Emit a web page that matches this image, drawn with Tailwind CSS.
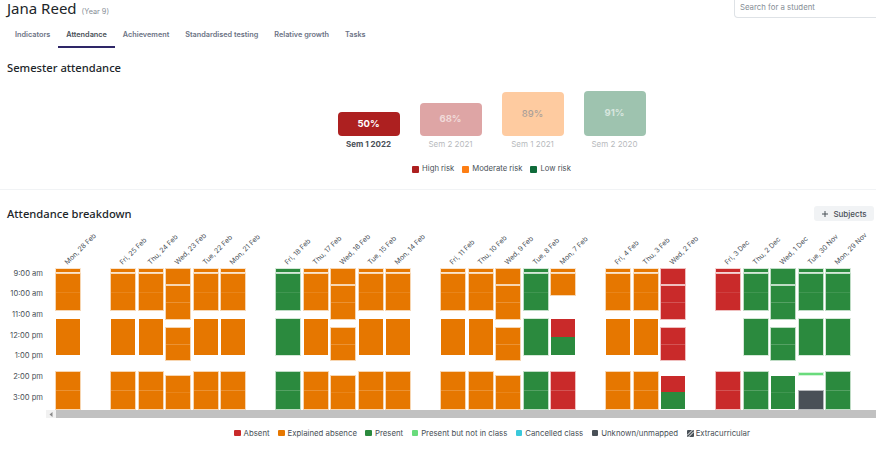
<!DOCTYPE html>
<html lang="en">
<head>
<meta charset="utf-8">
<script src="https://cdn.jsdelivr.net/npm/@tailwindcss/browser@4"></script>
<title>Attendance</title>
</head>
<body class="bg-white">
<div class="w-[876px] h-[456px] overflow-hidden font-['Inter',sans-serif] text-[#343a40] flex flex-col">
  <!-- header -->
  <div class="h-[26px] flex justify-between pl-[7px]">
    <div class="flex items-baseline gap-[5px]">
      <span class="font-['Noto_Sans',sans-serif] text-[15px] leading-[17px] text-[#212529]">Jana Reed</span>
      <span class="text-[7.3px] text-[#868e96]">(Year 9)</span>
    </div>
    <div class="w-[150px] h-[18px] ml-auto -mr-[8px] border border-t-0 border-[#dee2e6] rounded-bl-[4px] flex items-center pl-[5px] pb-[2px] text-[7.8px] text-[#868e96]">Search for a student</div>
  </div>
  <!-- tabs -->
  <div class="h-[22px] flex pl-[7px] text-[7.3px] font-semibold text-[#6c7385]">
    <div class="px-2 pt-[4px]">Indicators</div>
    <div class="px-2 pt-[4px] text-[#495057] border-b-2 border-[#2e2667]">Attendance</div>
    <div class="px-2 pt-[4px]">Achievement</div>
    <div class="px-2 pt-[4px]">Standardised testing</div>
    <div class="px-2 pt-[4px]">Relative growth</div>
    <div class="px-2 pt-[4px]">Tasks</div>
  </div>
  <!-- semester -->
  <div class="pl-[7px] pt-[11px] h-[29px] font-['Noto_Sans',sans-serif] text-[11.2px] leading-[18px] font-medium text-[#212529]">Semester attendance</div>
  <div class="pl-[107px] h-[112px] flex flex-col">
    <div class="h-[66px] mt-[-7px] flex items-end justify-center gap-5 text-[8.5px] font-semibold">
      <div class="w-[62px] flex flex-col items-center">
        <div class="w-full h-6 rounded-[4px] bg-[#ad2020] text-white text-[9.5px] font-bold flex items-center justify-center">50%</div>
      </div>
      <div class="w-[62px] h-[33px] rounded-[4px] bg-[#ad2020] opacity-40 text-white/60 text-[9.5px] font-bold flex items-center justify-center">68%</div>
      <div class="w-[62px] h-[44px] rounded-[4px] bg-[#fd7e14] opacity-40 text-[#2d1000] text-[9.5px] font-medium flex items-center justify-center">89%</div>
      <div class="w-[62px] h-[45px] rounded-[4px] bg-[#0f6b3a] opacity-40 text-white/60 text-[9.5px] font-bold flex items-center justify-center">91%</div>
    </div>
    <div class="flex justify-center gap-5 mt-[3px] text-[8px] leading-[10px] text-center">
      <div class="w-[62px] font-bold text-[#495057]">Sem 1 2022</div>
      <div class="w-[62px] text-[#495057] opacity-40">Sem 2 2021</div>
      <div class="w-[62px] text-[#495057] opacity-40">Sem 1 2021</div>
      <div class="w-[62px] text-[#495057] opacity-40">Sem 2 2020</div>
    </div>
    <div class="flex justify-center gap-[8px] mt-[15px] text-[7.7px] leading-[10px] text-[#495057]">
      <div class="flex items-center gap-[3px]"><span class="w-[7px] h-[7px] rounded-[1px] bg-[#ad2020]"></span>High risk</div>
      <div class="flex items-center gap-[3px]"><span class="w-[7px] h-[7px] rounded-[1px] bg-[#fd7e14]"></span>Moderate risk</div>
      <div class="flex items-center gap-[3px]"><span class="w-[7px] h-[7px] rounded-[1px] bg-[#0f6b3a]"></span>Low risk</div>
    </div>
  </div>
  <div class="h-px bg-[#f1f3f5]"></div>
  <!-- breakdown -->
  <div class="h-[43px] pl-[7px] pr-[2px] pt-[16px] flex justify-between items-start">
    <span class="font-['Noto_Sans',sans-serif] text-[11.2px] leading-[18px] -mt-px font-medium text-[#212529]">Attendance breakdown</span>
    <div class="w-[60px] h-[15px] rounded-[3px] bg-[#f1f3f5] flex items-center justify-center gap-[4px] text-[8px] font-medium text-[#495057]">
      <svg width="8" height="8" viewBox="0 0 8 8" fill="none" stroke="#495057" stroke-width="1"><path d="M4 1v6M1 4h6"/></svg>
      Subjects
    </div>
  </div>
  <div class="flex">
    <div class="w-[46px] shrink-0 pt-[30.5px] pr-[3px] text-right text-[7.6px] text-[#495057]">
      <div class="h-[20.7px] leading-[20.7px]">9:00 am</div>
      <div class="h-[20.7px] leading-[20.7px]">10:00 am</div>
      <div class="h-[20.7px] leading-[20.7px]">11:00 am</div>
      <div class="h-[20.7px] leading-[20.7px]">12:00 pm</div>
      <div class="h-[20.7px] leading-[20.7px]">1:00 pm</div>
      <div class="h-[20.7px] leading-[20.7px]">2:00 pm</div>
      <div class="h-[20.7px] leading-[20.7px]">3:00 pm</div>
    </div>
    <div class="flex-1 min-w-0">
      <div class="flex pl-[10px] gap-[31px] text-[6.9px] h-[176px]">

        <div class="flex gap-[3.5px]">
          <div class="w-6 flex flex-col text-[#e67700]">
            <div class="relative h-9"><span class="absolute left-[14px] bottom-[2px] origin-bottom-left -rotate-45 whitespace-nowrap text-[#495057]">Mon, 28 Feb</span></div>
            <div class="h-[3px] bg-current ring-1 ring-current/20"></div>
            <div class="h-9 mt-[2px] bg-current ring-1 ring-current/30 flex flex-col justify-center"><i class="block h-px bg-white/10"></i></div>
            <div class="h-9 mt-[9px] bg-current"></div>
            <div class="h-[37px] mt-[17px] bg-current ring-1 ring-current/30 flex flex-col justify-center"><i class="block h-px bg-white/20"></i></div>
          </div>
        </div>

        <div class="flex gap-[3.5px]">
          <div class="w-6 flex flex-col text-[#e67700]">
            <div class="relative h-9"><span class="absolute left-[14px] bottom-[2px] origin-bottom-left -rotate-45 whitespace-nowrap text-[#495057]">Fri, 25 Feb</span></div>
            <div class="h-[3px] bg-current ring-1 ring-current/20"></div>
            <div class="h-9 mt-[2px] bg-current ring-1 ring-current/30 flex flex-col justify-center"><i class="block h-px bg-white/10"></i></div>
            <div class="h-9 mt-[9px] bg-current"></div>
            <div class="h-[37px] mt-[17px] bg-current ring-1 ring-current/30 flex flex-col justify-center"><i class="block h-px bg-white/20"></i></div>
          </div>
          <div class="w-6 flex flex-col text-[#e67700]">
            <div class="relative h-9"><span class="absolute left-[14px] bottom-[2px] origin-bottom-left -rotate-45 whitespace-nowrap text-[#495057]">Thu, 24 Feb</span></div>
            <div class="h-[3px] bg-current ring-1 ring-current/20"></div>
            <div class="h-9 mt-[2px] bg-current ring-1 ring-current/30 flex flex-col justify-center"><i class="block h-px bg-white/10"></i></div>
            <div class="h-9 mt-[9px] bg-current"></div>
            <div class="h-[37px] mt-[17px] bg-current ring-1 ring-current/30 flex flex-col justify-center"><i class="block h-px bg-white/20"></i></div>
          </div>
          <div class="w-6 flex flex-col text-[#e67700]">
            <div class="relative h-9"><span class="absolute left-[14px] bottom-[2px] origin-bottom-left -rotate-45 whitespace-nowrap text-[#495057]">Wed, 23 Feb</span></div>
            <div class="h-[15px] bg-current ring-1 ring-current/30"></div>
            <div class="h-[33px] mt-[2px] bg-current ring-1 ring-current/30 flex flex-col justify-center"><i class="block h-px bg-white/20"></i></div>
            <div class="h-[32px] mt-[9px] bg-current ring-1 ring-current/30 flex flex-col justify-center"><i class="block h-px bg-white/20"></i></div>
            <div class="h-[33px] mt-[16px] bg-current ring-1 ring-current/30 flex flex-col justify-center"><i class="block h-px bg-white/10"></i></div>
          </div>
          <div class="w-6 flex flex-col text-[#e67700]">
            <div class="relative h-9"><span class="absolute left-[14px] bottom-[2px] origin-bottom-left -rotate-45 whitespace-nowrap text-[#495057]">Tue, 22 Feb</span></div>
            <div class="h-[3px] bg-current ring-1 ring-current/20"></div>
            <div class="h-9 mt-[2px] bg-current ring-1 ring-current/30 flex flex-col justify-center"><i class="block h-px bg-white/10"></i></div>
            <div class="h-9 mt-[9px] bg-current"></div>
            <div class="h-[37px] mt-[17px] bg-current ring-1 ring-current/30 flex flex-col justify-center"><i class="block h-px bg-white/20"></i></div>
          </div>
          <div class="w-6 flex flex-col text-[#e67700]">
            <div class="relative h-9"><span class="absolute left-[14px] bottom-[2px] origin-bottom-left -rotate-45 whitespace-nowrap text-[#495057]">Mon, 21 Feb</span></div>
            <div class="h-[3px] bg-current ring-1 ring-current/20"></div>
            <div class="h-9 mt-[2px] bg-current ring-1 ring-current/30 flex flex-col justify-center"><i class="block h-px bg-white/10"></i></div>
            <div class="h-9 mt-[9px] bg-current"></div>
            <div class="h-[37px] mt-[17px] bg-current ring-1 ring-current/30 flex flex-col justify-center"><i class="block h-px bg-white/20"></i></div>
          </div>
        </div>

        <div class="flex gap-[3.5px]">
          <div class="w-6 flex flex-col text-[#2b8a3e]">
            <div class="relative h-9"><span class="absolute left-[14px] bottom-[2px] origin-bottom-left -rotate-45 whitespace-nowrap text-[#495057]">Fri, 18 Feb</span></div>
            <div class="h-[3px] bg-current ring-1 ring-current/20"></div>
            <div class="h-9 mt-[2px] bg-current ring-1 ring-current/30 flex flex-col justify-center"><i class="block h-px bg-white/10"></i></div>
            <div class="h-9 mt-[9px] bg-current ring-1 ring-current/20"></div>
            <div class="h-[37px] mt-[17px] bg-current ring-1 ring-current/30 flex flex-col justify-center"><i class="block h-px bg-white/20"></i></div>
          </div>
          <div class="w-6 flex flex-col text-[#e67700]">
            <div class="relative h-9"><span class="absolute left-[14px] bottom-[2px] origin-bottom-left -rotate-45 whitespace-nowrap text-[#495057]">Thu, 17 Feb</span></div>
            <div class="h-[3px] bg-current ring-1 ring-current/20"></div>
            <div class="h-9 mt-[2px] bg-current ring-1 ring-current/30 flex flex-col justify-center"><i class="block h-px bg-white/10"></i></div>
            <div class="h-9 mt-[9px] bg-current"></div>
            <div class="h-[37px] mt-[17px] bg-current ring-1 ring-current/30 flex flex-col justify-center"><i class="block h-px bg-white/20"></i></div>
          </div>
          <div class="w-6 flex flex-col text-[#e67700]">
            <div class="relative h-9"><span class="absolute left-[14px] bottom-[2px] origin-bottom-left -rotate-45 whitespace-nowrap text-[#495057]">Wed, 16 Feb</span></div>
            <div class="h-[15px] bg-current ring-1 ring-current/30"></div>
            <div class="h-[33px] mt-[2px] bg-current ring-1 ring-current/30 flex flex-col justify-center"><i class="block h-px bg-white/20"></i></div>
            <div class="h-[32px] mt-[9px] bg-current ring-1 ring-current/30 flex flex-col justify-center"><i class="block h-px bg-white/20"></i></div>
            <div class="h-[33px] mt-[16px] bg-current ring-1 ring-current/30 flex flex-col justify-center"><i class="block h-px bg-white/10"></i></div>
          </div>
          <div class="w-6 flex flex-col text-[#e67700]">
            <div class="relative h-9"><span class="absolute left-[14px] bottom-[2px] origin-bottom-left -rotate-45 whitespace-nowrap text-[#495057]">Tue, 15 Feb</span></div>
            <div class="h-[3px] bg-current ring-1 ring-current/20"></div>
            <div class="h-9 mt-[2px] bg-current ring-1 ring-current/30 flex flex-col justify-center"><i class="block h-px bg-white/10"></i></div>
            <div class="h-9 mt-[9px] bg-current"></div>
            <div class="h-[37px] mt-[17px] bg-current ring-1 ring-current/30 flex flex-col justify-center"><i class="block h-px bg-white/20"></i></div>
          </div>
          <div class="w-6 flex flex-col text-[#e67700]">
            <div class="relative h-9"><span class="absolute left-[14px] bottom-[2px] origin-bottom-left -rotate-45 whitespace-nowrap text-[#495057]">Mon, 14 Feb</span></div>
            <div class="h-[3px] bg-current ring-1 ring-current/20"></div>
            <div class="h-9 mt-[2px] bg-current ring-1 ring-current/30 flex flex-col justify-center"><i class="block h-px bg-white/10"></i></div>
            <div class="h-9 mt-[9px] bg-current"></div>
            <div class="h-[37px] mt-[17px] bg-current ring-1 ring-current/30 flex flex-col justify-center"><i class="block h-px bg-white/20"></i></div>
          </div>
        </div>

        <div class="flex gap-[3.5px]">
          <div class="w-6 flex flex-col text-[#e67700]">
            <div class="relative h-9"><span class="absolute left-[14px] bottom-[2px] origin-bottom-left -rotate-45 whitespace-nowrap text-[#495057]">Fri, 11 Feb</span></div>
            <div class="h-[3px] bg-current ring-1 ring-current/20"></div>
            <div class="h-9 mt-[2px] bg-current ring-1 ring-current/30 flex flex-col justify-center"><i class="block h-px bg-white/10"></i></div>
            <div class="h-9 mt-[9px] bg-current"></div>
            <div class="h-[37px] mt-[17px] bg-current ring-1 ring-current/30 flex flex-col justify-center"><i class="block h-px bg-white/20"></i></div>
          </div>
          <div class="w-6 flex flex-col text-[#e67700]">
            <div class="relative h-9"><span class="absolute left-[14px] bottom-[2px] origin-bottom-left -rotate-45 whitespace-nowrap text-[#495057]">Thu, 10 Feb</span></div>
            <div class="h-[3px] bg-current ring-1 ring-current/20"></div>
            <div class="h-9 mt-[2px] bg-current ring-1 ring-current/30 flex flex-col justify-center"><i class="block h-px bg-white/10"></i></div>
            <div class="h-9 mt-[9px] bg-current"></div>
            <div class="h-[37px] mt-[17px] bg-current ring-1 ring-current/30 flex flex-col justify-center"><i class="block h-px bg-white/20"></i></div>
          </div>
          <div class="w-6 flex flex-col text-[#e67700]">
            <div class="relative h-9"><span class="absolute left-[14px] bottom-[2px] origin-bottom-left -rotate-45 whitespace-nowrap text-[#495057]">Wed, 9 Feb</span></div>
            <div class="h-[15px] bg-current ring-1 ring-current/30"></div>
            <div class="h-[33px] mt-[2px] bg-current ring-1 ring-current/30 flex flex-col justify-center"><i class="block h-px bg-white/20"></i></div>
            <div class="h-[32px] mt-[9px] bg-current ring-1 ring-current/30 flex flex-col justify-center"><i class="block h-px bg-white/20"></i></div>
            <div class="h-[33px] mt-[16px] bg-current ring-1 ring-current/30 flex flex-col justify-center"><i class="block h-px bg-white/10"></i></div>
          </div>
          <div class="w-6 flex flex-col text-[#2b8a3e]">
            <div class="relative h-9"><span class="absolute left-[14px] bottom-[2px] origin-bottom-left -rotate-45 whitespace-nowrap text-[#495057]">Tue, 8 Feb</span></div>
            <div class="h-[3px] bg-current ring-1 ring-current/20"></div>
            <div class="h-9 mt-[2px] bg-current ring-1 ring-current/30 flex flex-col justify-center"><i class="block h-px bg-white/10"></i></div>
            <div class="h-9 mt-[9px] bg-current ring-1 ring-current/20"></div>
            <div class="h-[37px] mt-[17px] bg-current ring-1 ring-current/30 flex flex-col justify-center"><i class="block h-px bg-white/20"></i></div>
          </div>
          <div class="w-6 flex flex-col text-[#e67700]">
            <div class="relative h-9"><span class="absolute left-[14px] bottom-[2px] origin-bottom-left -rotate-45 whitespace-nowrap text-[#495057]">Mon, 7 Feb</span></div>
            <div class="h-[3px] bg-current ring-1 ring-current/20"></div>
            <div class="h-[21px] mt-[2px] bg-current ring-1 ring-current/30"></div>
            <div class="h-[18px] mt-[24px] bg-[#c92a2a]"></div>
            <div class="h-[18px] bg-[#2b8a3e]"></div>
            <div class="h-[37px] mt-[17px] bg-[#c92a2a] ring-1 ring-[#c92a2a]/30 flex flex-col justify-center"><i class="block h-px bg-white/20"></i></div>
          </div>
        </div>

        <div class="flex gap-[3.5px]">
          <div class="w-6 flex flex-col text-[#e67700]">
            <div class="relative h-9"><span class="absolute left-[14px] bottom-[2px] origin-bottom-left -rotate-45 whitespace-nowrap text-[#495057]">Fri, 4 Feb</span></div>
            <div class="h-[3px] bg-current ring-1 ring-current/20"></div>
            <div class="h-9 mt-[2px] bg-current ring-1 ring-current/30 flex flex-col justify-center"><i class="block h-px bg-white/10"></i></div>
            <div class="h-9 mt-[9px] bg-current"></div>
            <div class="h-[37px] mt-[17px] bg-current ring-1 ring-current/30 flex flex-col justify-center"><i class="block h-px bg-white/20"></i></div>
          </div>
          <div class="w-6 flex flex-col text-[#e67700]">
            <div class="relative h-9"><span class="absolute left-[14px] bottom-[2px] origin-bottom-left -rotate-45 whitespace-nowrap text-[#495057]">Thu, 3 Feb</span></div>
            <div class="h-[3px] bg-current ring-1 ring-current/20"></div>
            <div class="h-9 mt-[2px] bg-current ring-1 ring-current/30 flex flex-col justify-center"><i class="block h-px bg-white/10"></i></div>
            <div class="h-9 mt-[9px] bg-current"></div>
            <div class="h-[37px] mt-[17px] bg-current ring-1 ring-current/30 flex flex-col justify-center"><i class="block h-px bg-white/20"></i></div>
          </div>
          <div class="w-6 flex flex-col text-[#c92a2a]">
            <div class="relative h-9"><span class="absolute left-[14px] bottom-[2px] origin-bottom-left -rotate-45 whitespace-nowrap text-[#495057]">Wed, 2 Feb</span></div>
            <div class="h-[15px] bg-current ring-1 ring-current/30"></div>
            <div class="h-[33px] mt-[2px] bg-current ring-1 ring-current/30 flex flex-col justify-center"><i class="block h-px bg-white/20"></i></div>
            <div class="h-[32px] mt-[9px] bg-current ring-1 ring-current/30 flex flex-col justify-center"><i class="block h-px bg-white/20"></i></div>
            <div class="h-[16px] mt-[16px] bg-current"></div>
            <div class="h-[17px] bg-[#2b8a3e]"></div>
          </div>
        </div>

        <div class="flex gap-[3.5px]">
          <div class="w-6 flex flex-col text-[#c92a2a]">
            <div class="relative h-9"><span class="absolute left-[14px] bottom-[2px] origin-bottom-left -rotate-45 whitespace-nowrap text-[#495057]">Fri, 3 Dec</span></div>
            <div class="h-[3px] bg-current ring-1 ring-current/20"></div>
            <div class="h-9 mt-[2px] bg-current ring-1 ring-current/30 flex flex-col justify-center"><i class="block h-px bg-white/10"></i></div>
            <div class="h-[37px] mt-[62px] bg-current ring-1 ring-current/30 flex flex-col justify-center"><i class="block h-px bg-white/20"></i></div>
          </div>
          <div class="w-6 flex flex-col text-[#2b8a3e]">
            <div class="relative h-9"><span class="absolute left-[14px] bottom-[2px] origin-bottom-left -rotate-45 whitespace-nowrap text-[#495057]">Thu, 2 Dec</span></div>
            <div class="h-[3px] bg-current ring-1 ring-current/20"></div>
            <div class="h-9 mt-[2px] bg-current ring-1 ring-current/30 flex flex-col justify-center"><i class="block h-px bg-white/10"></i></div>
            <div class="h-9 mt-[9px] bg-current ring-1 ring-current/20"></div>
            <div class="h-[37px] mt-[17px] bg-current ring-1 ring-current/30 flex flex-col justify-center"><i class="block h-px bg-white/20"></i></div>
          </div>
          <div class="w-6 flex flex-col text-[#2b8a3e]">
            <div class="relative h-9"><span class="absolute left-[14px] bottom-[2px] origin-bottom-left -rotate-45 whitespace-nowrap text-[#495057]">Wed, 1 Dec</span></div>
            <div class="h-[15px] bg-current ring-1 ring-current/30"></div>
            <div class="h-[33px] mt-[2px] bg-current ring-1 ring-current/30 flex flex-col justify-center"><i class="block h-px bg-white/20"></i></div>
            <div class="h-[32px] mt-[9px] bg-current ring-1 ring-current/30 flex flex-col justify-center"><i class="block h-px bg-white/20"></i></div>
            <div class="h-[33px] mt-[16px] bg-current flex flex-col justify-center"><i class="block h-px bg-white/10"></i></div>
          </div>
          <div class="w-6 flex flex-col text-[#2b8a3e]">
            <div class="relative h-9"><span class="absolute left-[14px] bottom-[2px] origin-bottom-left -rotate-45 whitespace-nowrap text-[#495057]">Tue, 30 Nov</span></div>
            <div class="h-[3px] bg-current ring-1 ring-current/20"></div>
            <div class="h-9 mt-[2px] bg-current ring-1 ring-current/30 flex flex-col justify-center"><i class="block h-px bg-white/10"></i></div>
            <div class="h-9 mt-[9px] bg-current ring-1 ring-current/20"></div>
            <div class="h-[2px] mt-[18px] bg-[#69db7c] ring-1 ring-[#69db7c]/30"></div>
            <div class="h-[18px] mt-[16px] bg-[#495057] ring-1 ring-[#495057]/40"></div>
          </div>
          <div class="w-6 flex flex-col text-[#2b8a3e]">
            <div class="relative h-9"><span class="absolute left-[14px] bottom-[2px] origin-bottom-left -rotate-45 whitespace-nowrap text-[#495057]">Mon, 29 Nov</span></div>
            <div class="h-[3px] bg-current ring-1 ring-current/20"></div>
            <div class="h-9 mt-[2px] bg-current ring-1 ring-current/30 flex flex-col justify-center"><i class="block h-px bg-white/10"></i></div>
            <div class="h-9 mt-[9px] bg-current ring-1 ring-current/20"></div>
            <div class="h-[37px] mt-[17px] bg-current ring-1 ring-current/30 flex flex-col justify-center"><i class="block h-px bg-white/20"></i></div>
          </div>
        </div>

      </div>
      <!-- scrollbar -->
      <div class="h-2 mt-px bg-[#f1f1f1] flex">
        <div class="w-[10px] flex items-center justify-center">
          <svg width="4" height="5" viewBox="0 0 4 5"><path d="M3.5 0v5L0.5 2.5z" fill="#8a8a8a"/></svg>
        </div>
        <div class="flex-1 bg-[#c1c1c1]"></div>
      </div>
    </div>
  </div>
  <!-- legend -->
  <div class="mt-[10px] pl-[108px] flex justify-center gap-[8.5px] text-[7.8px] leading-[10px] text-[#495057]">
    <div class="flex items-center gap-[3px]"><span class="w-[6.5px] h-[6.5px] rounded-[1px] bg-[#c92a2a]"></span>Absent</div>
    <div class="flex items-center gap-[3px]"><span class="w-[6.5px] h-[6.5px] rounded-[1px] bg-[#e67700]"></span>Explained absence</div>
    <div class="flex items-center gap-[3px]"><span class="w-[6.5px] h-[6.5px] rounded-[1px] bg-[#2b8a3e]"></span>Present</div>
    <div class="flex items-center gap-[3px]"><span class="w-[6.5px] h-[6.5px] rounded-[1px] bg-[#69db7c]"></span>Present but not in class</div>
    <div class="flex items-center gap-[3px]"><span class="w-[6.5px] h-[6.5px] rounded-[1px] bg-[#3bc9db]"></span>Cancelled class</div>
    <div class="flex items-center gap-[3px]"><span class="w-[6.5px] h-[6.5px] rounded-[1px] bg-[#495057]"></span>Unknown/unmapped</div>
    <div class="flex items-center gap-[2px]">
      <svg width="7" height="7" viewBox="0 0 7 7"><rect width="7" height="7" rx="1" fill="#495057"/><path d="M0 5.5L5.5 0M1.5 7L7 1.5" stroke="#fff" stroke-width="1"/></svg>
      Extracurricular
    </div>
  </div>
</div>
</body>
</html>
